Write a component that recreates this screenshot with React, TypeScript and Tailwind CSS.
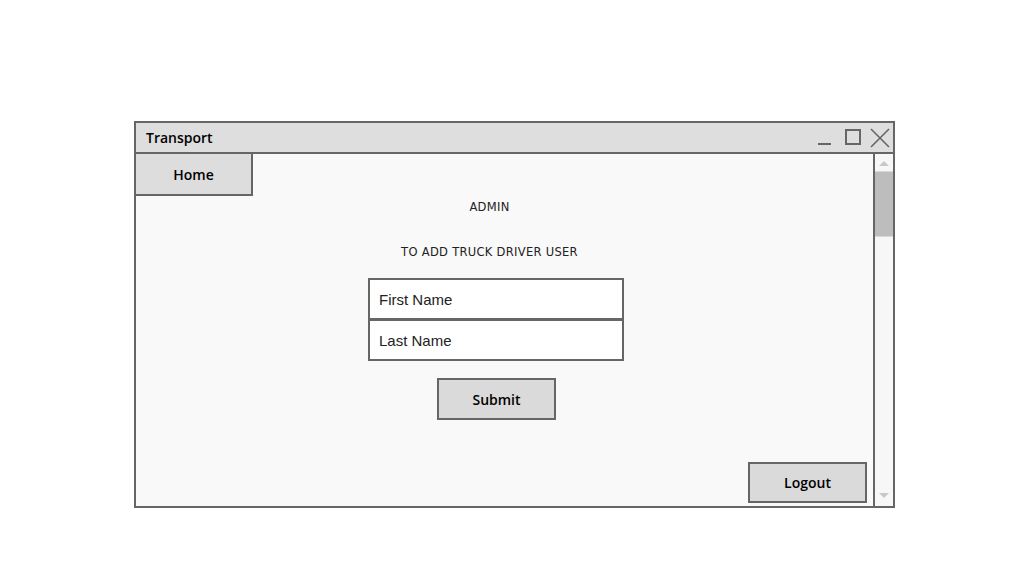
import React from 'react';

const WindowControls: React.FC = () => (
  <div className="flex items-center h-full">
    <svg width="16" height="20" viewBox="0 0 16 20" className="mr-[12px]">
      <line x1="2" y1="16" x2="15" y2="16" stroke="#666" strokeWidth="2" />
    </svg>
    <svg width="18" height="20" viewBox="0 0 18 20" className="mr-[8px]">
      <rect x="2" y="2" width="14" height="14" fill="none" stroke="#666" strokeWidth="2" />
    </svg>
    <svg width="20" height="20" viewBox="0 0 20 20" className="mr-[3px]">
      <path d="M1 1 L19 19 M19 1 L1 19" stroke="#666" strokeWidth="1.6" />
    </svg>
  </div>
);

const Scrollbar: React.FC = () => (
  <div className="w-[20px] border-l-2 border-[#666] bg-[#f7f7f7] flex flex-col items-stretch">
    <div className="h-[17px] flex items-center justify-center">
      <svg width="12" height="7" viewBox="0 0 12 7" className="mt-[1px]">
        <path d="M1 6 L6 1 L11 6 Z" fill="#c8c8c8" />
      </svg>
    </div>
    <div className="h-[66px] bg-[#bdbdbd] border-t border-b border-[#d8d8d8]" />
    <div className="flex-1" />
    <div className="h-[14px] flex items-start justify-center">
      <svg width="12" height="7" viewBox="0 0 12 7">
        <path d="M1 1 L6 6 L11 1 Z" fill="#c8c8c8" />
      </svg>
    </div>
  </div>
);

const App: React.FC = () => {
  return (
    <div className="w-[1036px] h-[563px] bg-white overflow-hidden pt-[121px] pl-[134px]">
      <div className="w-[761px] h-[387px] border-2 border-[#666] flex flex-col bg-[#f9f9f9]">
        <div className="h-[31px] shrink-0 bg-[#dedede] border-b-2 border-[#666] flex items-center justify-between pl-[10px]">
          <span className="font-['Open_Sans',sans-serif] font-semibold text-[14px] text-black leading-none">Transport</span>
          <WindowControls />
        </div>

        <div className="flex flex-1">
          <div className="flex-1 flex flex-col">
            <button className="w-[117px] h-[42px] shrink-0 bg-[#dddddd] border-r-2 border-b-2 border-[#666] font-['Open_Sans',sans-serif] font-semibold text-[14px] text-black">
              Home
            </button>

            <div className="flex flex-col items-center pr-[30px] font-['DejaVu_Sans',sans-serif] text-[11.5px] text-[#222] tracking-[0.3px]">
              <p className="mt-[4px] leading-[14px]">ADMIN</p>
              <p className="mt-[31px] leading-[14px]">TO ADD TRUCK DRIVER USER</p>
            </div>

            <div className="ml-[232px] mt-[19px] flex flex-col w-[256px]">
              <input
                readOnly
                value="First Name"
                className="h-[42px] border-2 border-[#666] bg-white px-[9px] font-['Liberation_Sans',sans-serif] text-[15px] text-[#222] outline-none"
              />
              <input
                readOnly
                value="Last Name"
                className="h-[42px] -mt-px border-2 border-[#666] bg-white px-[9px] pt-[1px] font-['Liberation_Sans',sans-serif] text-[15px] text-[#222] outline-none"
              />
            </div>

            <button className="ml-[301px] mt-[17px] w-[119px] h-[42px] bg-[#dadada] border-2 border-[#666] font-['Open_Sans',sans-serif] font-semibold text-[14px] text-black">
              Submit
            </button>

            <div className="flex-1" />
            <div className="flex justify-end pr-[6px] pb-[3px]">
              <button className="w-[119px] h-[41px] bg-[#dadada] border-2 border-[#666] font-['Open_Sans',sans-serif] font-semibold text-[14px] text-black">
                Logout
              </button>
            </div>
          </div>
          <Scrollbar />
        </div>
      </div>
    </div>
  );
};

export default App;
